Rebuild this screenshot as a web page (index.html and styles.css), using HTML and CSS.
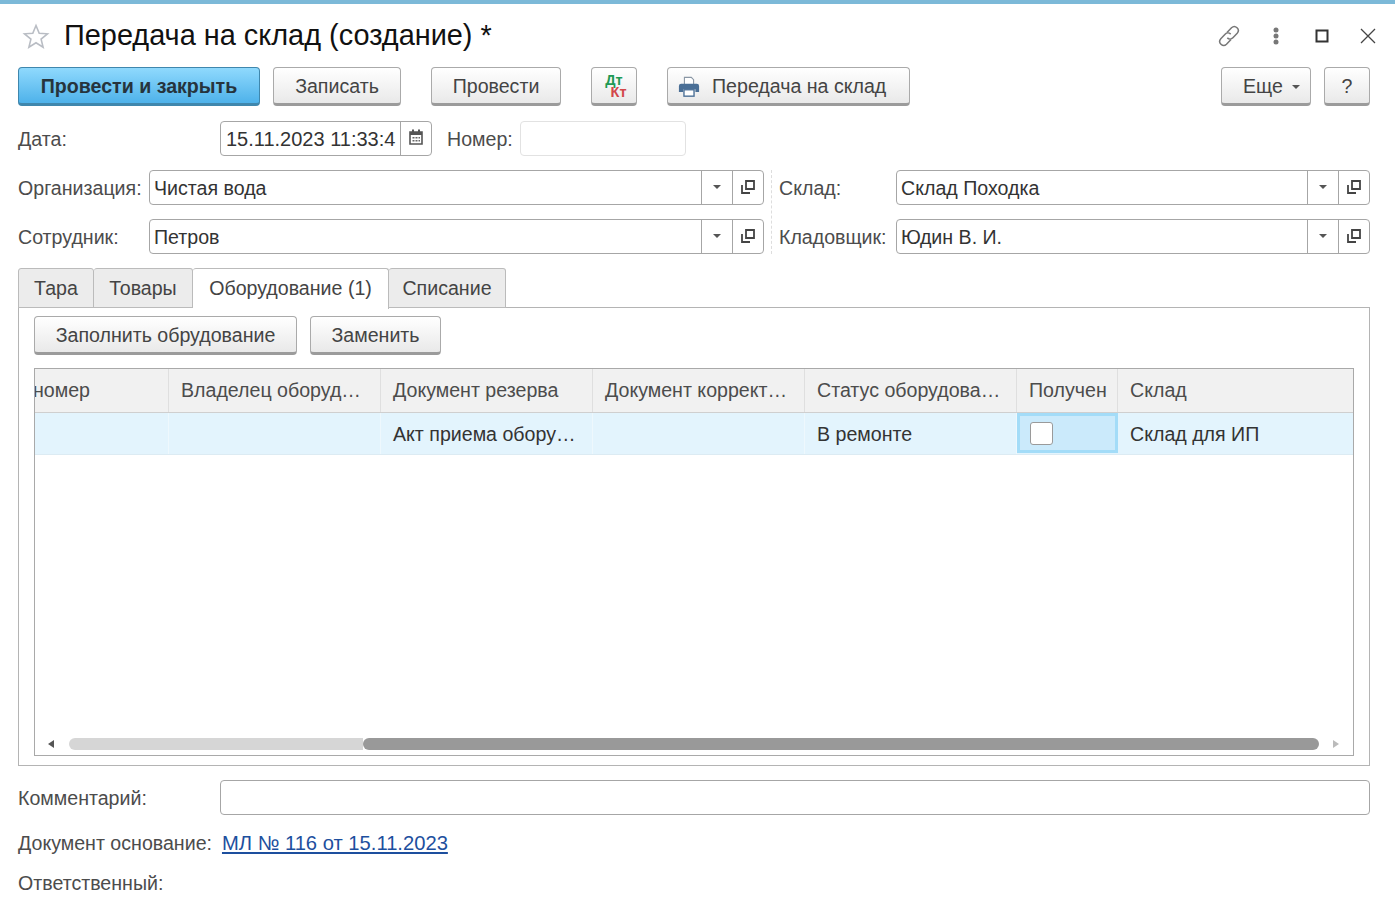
FILE: index.html
```html
<!DOCTYPE html>
<html lang="ru">
<head>
    <meta charset="UTF-8">
    <meta name="viewport" content="width=device-width, initial-scale=1.0">
    <title>Передача на склад (создание)</title>
    <link rel="stylesheet" href="styles.css">
</head>
<body>
    <div class="topline"></div>

    <header class="titlebar">
        <svg class="star" width="28" height="26" viewBox="0 0 28 26">
            <path d="M14 2.5l3.2 7.7 8.3.6-6.4 5.3 2 8.1-7.100-4.400-7.100 4.400 2-8.100-6.400-5.300 8.300-.6z" fill="none" stroke="#b9bdc4" stroke-width="1.600"/>
        </svg>
        <h1>Передача на склад (создание) *</h1>
        <div class="window-icons">
            <svg width="26" height="26" viewBox="0 0 26 26" fill="none" stroke="#777" stroke-width="1.500">
                <path d="M11 9.500l4.500-4.800a4 4 0 0 1 5.700 5.600l-4.300 4.500a4 4 0 0 1-5.600.1"/>
                <path d="M15 16.500l-4.500 4.800a4 4 0 0 1-5.700-5.600l4.300-4.500a4 4 0 0 1 5.600-.1"/>
            </svg>
            <svg class="dots" width="6" height="18" viewBox="0 0 6 18" fill="#777">
                <circle cx="3" cy="3" r="2.500"/><circle cx="3" cy="9" r="2.500"/><circle cx="3" cy="15" r="2.500"/>
            </svg>
            <svg class="maximize" width="14" height="14" viewBox="0 0 14 14">
                <rect x="1.500" y="1.500" width="11" height="11" fill="none" stroke="#333" stroke-width="2"/>
            </svg>
            <svg class="close" width="16" height="16" viewBox="0 0 16 16">
                <path d="M1 1l14 14M15 1L1 15" stroke="#444" stroke-width="1.300"/>
            </svg>
        </div>
    </header>

    <div class="toolbar">
        <button class="btn btn-primary w-post-close">Провести и закрыть</button>
        <button class="btn w-write">Записать</button>
        <button class="btn w-post">Провести</button>
        <button class="btn w-dtkt"><span class="dtkt"><span class="dt">Дт</span><span class="kt">Кт</span></span></button>
        <button class="btn w-print">
            <svg width="22" height="22" viewBox="0 0 24 24">
                <path d="M7 9V1.500h7.500L17 4v5" fill="#fff" stroke="#8a97a5" stroke-width="1.200"/>
                <path d="M3.500 8.500h17a2.500 2.500 0 0 1 2.500 2.500v6.500h-4v-3H5.500v3h-4.500V11a2.500 2.500 0 0 1 2.500-2.500z" fill="#4a6f96"/>
                <rect x="6.500" y="15" width="11" height="7" fill="#fff" stroke="#4a6f96" stroke-width="1.500"/>
            </svg>
            Передача на склад
        </button>
        <div class="toolbar-right">
            <button class="btn w-more">Еще <span class="caret"></span></button>
            <button class="btn w-help">?</button>
        </div>
    </div>

    <div class="row date-row">
        <label class="label w-date-label">Дата:</label>
        <div class="field w-date">
            <span class="value value-date">15.11.2023 11:33:4</span>
            <span class="field-btn cal">
                <svg width="14" height="16" viewBox="0 0 14 16">
                    <path d="M1 3h12v12H1z" fill="#fff" stroke="#555" stroke-width="1.600"/>
                    <path d="M1 3h12v3H1zM3 0.500h2v3H3zM9 0.500h2v3H9z" fill="#555"/>
                    <path d="M3.500 8h2v1.500h-2zM6.500 8h2v1.500h-2zM9.500 8h1.500v1.500H9.500zM3.500 11h2v1.500h-2zM6.500 11h2v1.500h-2zM9.500 11h1.500v1.500H9.500z" fill="#666"/>
                </svg>
            </span>
        </div>
        <label class="label w-num-label">Номер:</label>
        <div class="field field-off w-num"></div>
    </div>

    <div class="columns">
        <div class="col-left">
            <div class="row">
                <label class="label w-left-label">Организация:</label>
                <div class="field grow">
                    <span class="value">Чистая вода</span>
                    <span class="field-btn"><span class="caret"></span></span>
                    <span class="field-btn open"><svg width="14" height="14" viewBox="0 0 14 14"><path d="M5 1h8v8H5z" fill="none" stroke="#444" stroke-width="1.800"/><path d="M1 5v8h8" fill="none" stroke="#444" stroke-width="1.800"/></svg></span>
                </div>
            </div>
            <div class="row">
                <label class="label w-left-label">Сотрудник:</label>
                <div class="field grow">
                    <span class="value">Петров</span>
                    <span class="field-btn"><span class="caret"></span></span>
                    <span class="field-btn open"><svg width="14" height="14" viewBox="0 0 14 14"><path d="M5 1h8v8H5z" fill="none" stroke="#444" stroke-width="1.800"/><path d="M1 5v8h8" fill="none" stroke="#444" stroke-width="1.800"/></svg></span>
                </div>
            </div>
        </div>
        <div class="col-right">
            <div class="row">
                <label class="label w-right-label">Склад:</label>
                <div class="field grow">
                    <span class="value">Склад Походка</span>
                    <span class="field-btn"><span class="caret"></span></span>
                    <span class="field-btn open"><svg width="14" height="14" viewBox="0 0 14 14"><path d="M5 1h8v8H5z" fill="none" stroke="#444" stroke-width="1.800"/><path d="M1 5v8h8" fill="none" stroke="#444" stroke-width="1.800"/></svg></span>
                </div>
            </div>
            <div class="row">
                <label class="label w-right-label">Кладовщик:</label>
                <div class="field grow">
                    <span class="value">Юдин В. И.</span>
                    <span class="field-btn"><span class="caret"></span></span>
                    <span class="field-btn open"><svg width="14" height="14" viewBox="0 0 14 14"><path d="M5 1h8v8H5z" fill="none" stroke="#444" stroke-width="1.800"/><path d="M1 5v8h8" fill="none" stroke="#444" stroke-width="1.800"/></svg></span>
                </div>
            </div>
        </div>
    </div>

    <div class="tabs">
        <div class="tab w-tab1">Тара</div>
        <div class="tab w-tab2">Товары</div>
        <div class="tab tab-active w-tab3">Оборудование (1)</div>
        <div class="tab w-tab4">Списание</div>
    </div>

    <section class="panel">
        <div class="panel-buttons">
            <button class="btn w-fill">Заполнить обрудование</button>
            <button class="btn w-replace">Заменить</button>
        </div>

        <div class="grid">
            <div class="grid-row grid-head">
                <div class="cell first">номер</div>
                <div class="cell">Владелец оборуд…</div>
                <div class="cell">Документ резерва</div>
                <div class="cell">Документ коррект…</div>
                <div class="cell">Статус оборудова…</div>
                <div class="cell">Получен</div>
                <div class="cell last">Склад</div>
            </div>
            <div class="grid-row grid-line">
                <div class="cell first"></div>
                <div class="cell"></div>
                <div class="cell">Акт приема обору…</div>
                <div class="cell"></div>
                <div class="cell">В ремонте</div>
                <div class="cell cell-check"><span class="check"></span></div>
                <div class="cell last">Склад для ИП</div>
            </div>
            <div class="grid-empty"></div>
            <div class="scroll">
                <span class="arrow arrow-left"></span>
                <div class="scroll-track">
                    <div class="scroll-rest"></div>
                    <div class="scroll-thumb"></div>
                </div>
                <span class="arrow arrow-right"></span>
            </div>
        </div>
    </section>

    <div class="row comment-row">
        <label class="label w-date-label">Комментарий:</label>
        <div class="field grow"></div>
    </div>

    <div class="line doc-line">
        <span class="label">Документ основание:</span>
        <a class="link" href="#">МЛ № 116 от 15.11.2023</a>
    </div>
    <div class="line resp-line">
        <span class="label">Ответственный:</span>
    </div>
</body>
</html>
```

FILE: styles.css
```css
* {
    box-sizing: border-box;
}

html, body {
    height: 913px;
    overflow: hidden;
}

body {
    margin: 0;
    padding: 0 25px 0 18px;
    background-color: #fff;
    font-family: 'Liberation Sans', Arial, sans-serif;
    font-size: 19.6px;
    color: #333;
}

.topline {
    height: 4px;
    margin: 0 -25px 0 -18px;
    background-color: #7cb9d8;
}

/* title */
.titlebar {
    display: flex;
    align-items: center;
    height: 63px;
}

.star {
    margin: 0 14px 0 4px;
    flex: none;
}

h1 {
    margin: 0;
    font-size: 28.9px;
    font-weight: normal;
    color: #111;
}

.window-icons {
    display: flex;
    align-items: center;
    margin-left: auto;
    margin-right: -6px;
}

.dots {
    margin-left: 31px;
}

.maximize {
    margin-left: 36px;
}

.close {
    margin-left: 31px;
}

/* buttons */
.toolbar {
    display: flex;
    height: 39px;
}

.toolbar-right {
    display: flex;
    gap: 13px;
    margin-left: auto;
}

.btn {
    display: flex;
    align-items: center;
    justify-content: center;
    height: 39px;
    padding: 2px 0 0;
    border: 1px solid #aaa;
    border-bottom: 3px solid #9b9b9b;
    border-radius: 4px;
    background: linear-gradient(#fff, #e9e9e9);
    font: inherit;
    color: #444;
    flex: none;
}

.btn-primary {
    border-color: #3f87ad;
    background: linear-gradient(#8fd9fd, #4eb2ea);
    font-weight: bold;
    color: #26343d;
}

.w-post-close { width: 242px; }
.w-write { width: 128px; margin-left: 13px; }
.w-post { width: 130px; margin-left: 30px; }
.w-dtkt { width: 46px; margin-left: 30px; padding-top: 0; }
.w-print { width: 243px; margin-left: 30px; gap: 12px; justify-content: flex-start; padding-left: 10px; }
.w-more { width: 90px; gap: 9px; justify-content: flex-start; padding-left: 21px; }
.w-help { width: 46px; }

.dtkt {
    display: flex;
    flex-direction: column;
    width: 25px;
    font-size: 14.5px;
    font-weight: bold;
    line-height: 12px;
}

.dt {
    color: #1f9a55;
}

.kt {
    align-self: flex-end;
    color: #d2474a;
}

.caret {
    width: 0;
    height: 0;
    border-left: 4px solid transparent;
    border-right: 4px solid transparent;
    border-top: 4px solid #555;
}

/* fields */
.row {
    display: flex;
    align-items: center;
    height: 35px;
}

.date-row {
    margin-top: 15px;
}

.label {
    flex: none;
    color: #4c4c4c;
}

.row .label {
    padding-top: 2px;
}

.w-date-label { width: 202px; }
.w-num-label { width: 73px; margin-left: 15px; }
.w-left-label { width: 131px; }
.w-right-label { width: 117px; }

.field {
    display: flex;
    align-items: stretch;
    height: 35px;
    border: 1px solid #a6a6a6;
    border-radius: 4px;
    background-color: #fff;
}

.field-off {
    border-color: #e2e2e2;
}

.grow {
    flex: 1;
}

.w-date { width: 212px; }
.w-num { width: 166px; }

.value {
    flex: 1;
    padding-left: 4px;
    line-height: 35px;
    white-space: nowrap;
    overflow: hidden;
    color: #333;
}

.value-date {
    padding-left: 5px;
    font-size: 20px;
}

.field-btn {
    display: flex;
    align-items: center;
    justify-content: center;
    flex: none;
    width: 31px;
    padding-bottom: 2px;
    border-left: 1px solid #a6a6a6;
}

.cal {
    padding-bottom: 3px;
}

.columns {
    display: flex;
    margin-top: 14px;
}

.col-left,
.col-right {
    display: flex;
    flex-direction: column;
    gap: 14px;
}

.col-left {
    width: 746px;
}

.col-right {
    width: 599px;
    margin-left: 7px;
    padding-left: 7px;
    border-left: 1px dashed #ddd;
}

/* tabs */
.tabs {
    display: flex;
    height: 40px;
    margin-top: 14px;
}

.tab {
    display: flex;
    align-items: center;
    justify-content: center;
    height: 40px;
    border: 1px solid #bbb;
    border-left-width: 0;
    border-radius: 3px 3px 0 0;
    background-color: #ececec;
    color: #444;
}

.tab:first-child {
    border-left-width: 1px;
}

.tab-active {
    position: relative;
    z-index: 1;
    height: 41px;
    padding-bottom: 1px;
    border-bottom: 0;
    background-color: #fff;
}

.w-tab1 { width: 76px; }
.w-tab2 { width: 99px; }
.w-tab3 { width: 196px; }
.w-tab4 { width: 117px; }

.panel {
    display: flex;
    flex-direction: column;
    height: 459px;
    margin-top: -1px;
    padding: 8px 15px 9px 15px;
    border: 1px solid #b4b4b4;
}

.panel-buttons {
    display: flex;
    gap: 13px;
}

.w-fill { width: 263px; }
.w-replace { width: 131px; }

/* table */
.grid {
    display: flex;
    flex-direction: column;
    flex: 1;
    margin-top: 13px;
    border: 1px solid #a9a9a9;
}

.grid-row {
    display: grid;
    grid-template-columns: 134px 212px 212px 212px 212px 101px 1fr;
}

.grid-head {
    height: 44px;
    background-color: #f1f1f1;
    border-bottom: 1px solid #cfcfcf;
    color: #4c4c4c;
}

.grid-line {
    height: 42px;
    background-color: #e3f4fd;
    border-bottom: 1px solid #dcebf3;
}

.cell {
    display: flex;
    align-items: center;
    padding-left: 12px;
    border-right: 1px solid #dfdfdf;
    white-space: nowrap;
    overflow: hidden;
}

.grid-line .cell {
    padding-top: 2px;
    border-right-color: #eef8fd;
}

.cell.first {
    padding-left: 0;
    text-indent: -2px;
}

.cell.last,
.grid-line .cell.last {
    border-right: 0;
}

.grid-line .cell-check {
    margin-bottom: 1px;
    padding: 0 0 0 10px;
    background-color: #cbeafb;
    border: 3px solid #a3dcf8;
}

.check {
    width: 23px;
    height: 23px;
    border: 1px solid #9a9a9a;
    border-radius: 3px;
    background-color: #fff;
}

.grid-empty {
    flex: 1;
}

.scroll {
    display: flex;
    align-items: center;
    height: 12px;
    margin-bottom: 5px;
    padding: 0 14px 0 13px;
}

.arrow {
    width: 0;
    height: 0;
    border-top: 4px solid transparent;
    border-bottom: 4px solid transparent;
}

.arrow-left {
    border-right: 6px solid #555;
}

.arrow-right {
    border-left: 6px solid #bbb;
}

.scroll-track {
    display: flex;
    flex: 1;
    height: 12px;
    margin: 0 14px 0 15px;
}

.scroll-rest {
    width: 294px;
    border-radius: 6px 0 0 6px;
    background-color: #d6d6d6;
}

.scroll-thumb {
    flex: 1;
    border-radius: 6px;
    background-color: #999;
}

/* bottom */
.comment-row {
    margin-top: 14px;
}

.line {
    display: flex;
    align-items: center;
}

.doc-line {
    gap: 10px;
    height: 22px;
    margin-top: 17px;
}

.resp-line {
    height: 22px;
    margin-top: 18px;
}

.link {
    font-size: 20.2px;
    color: #1d4f9e;
}
```
